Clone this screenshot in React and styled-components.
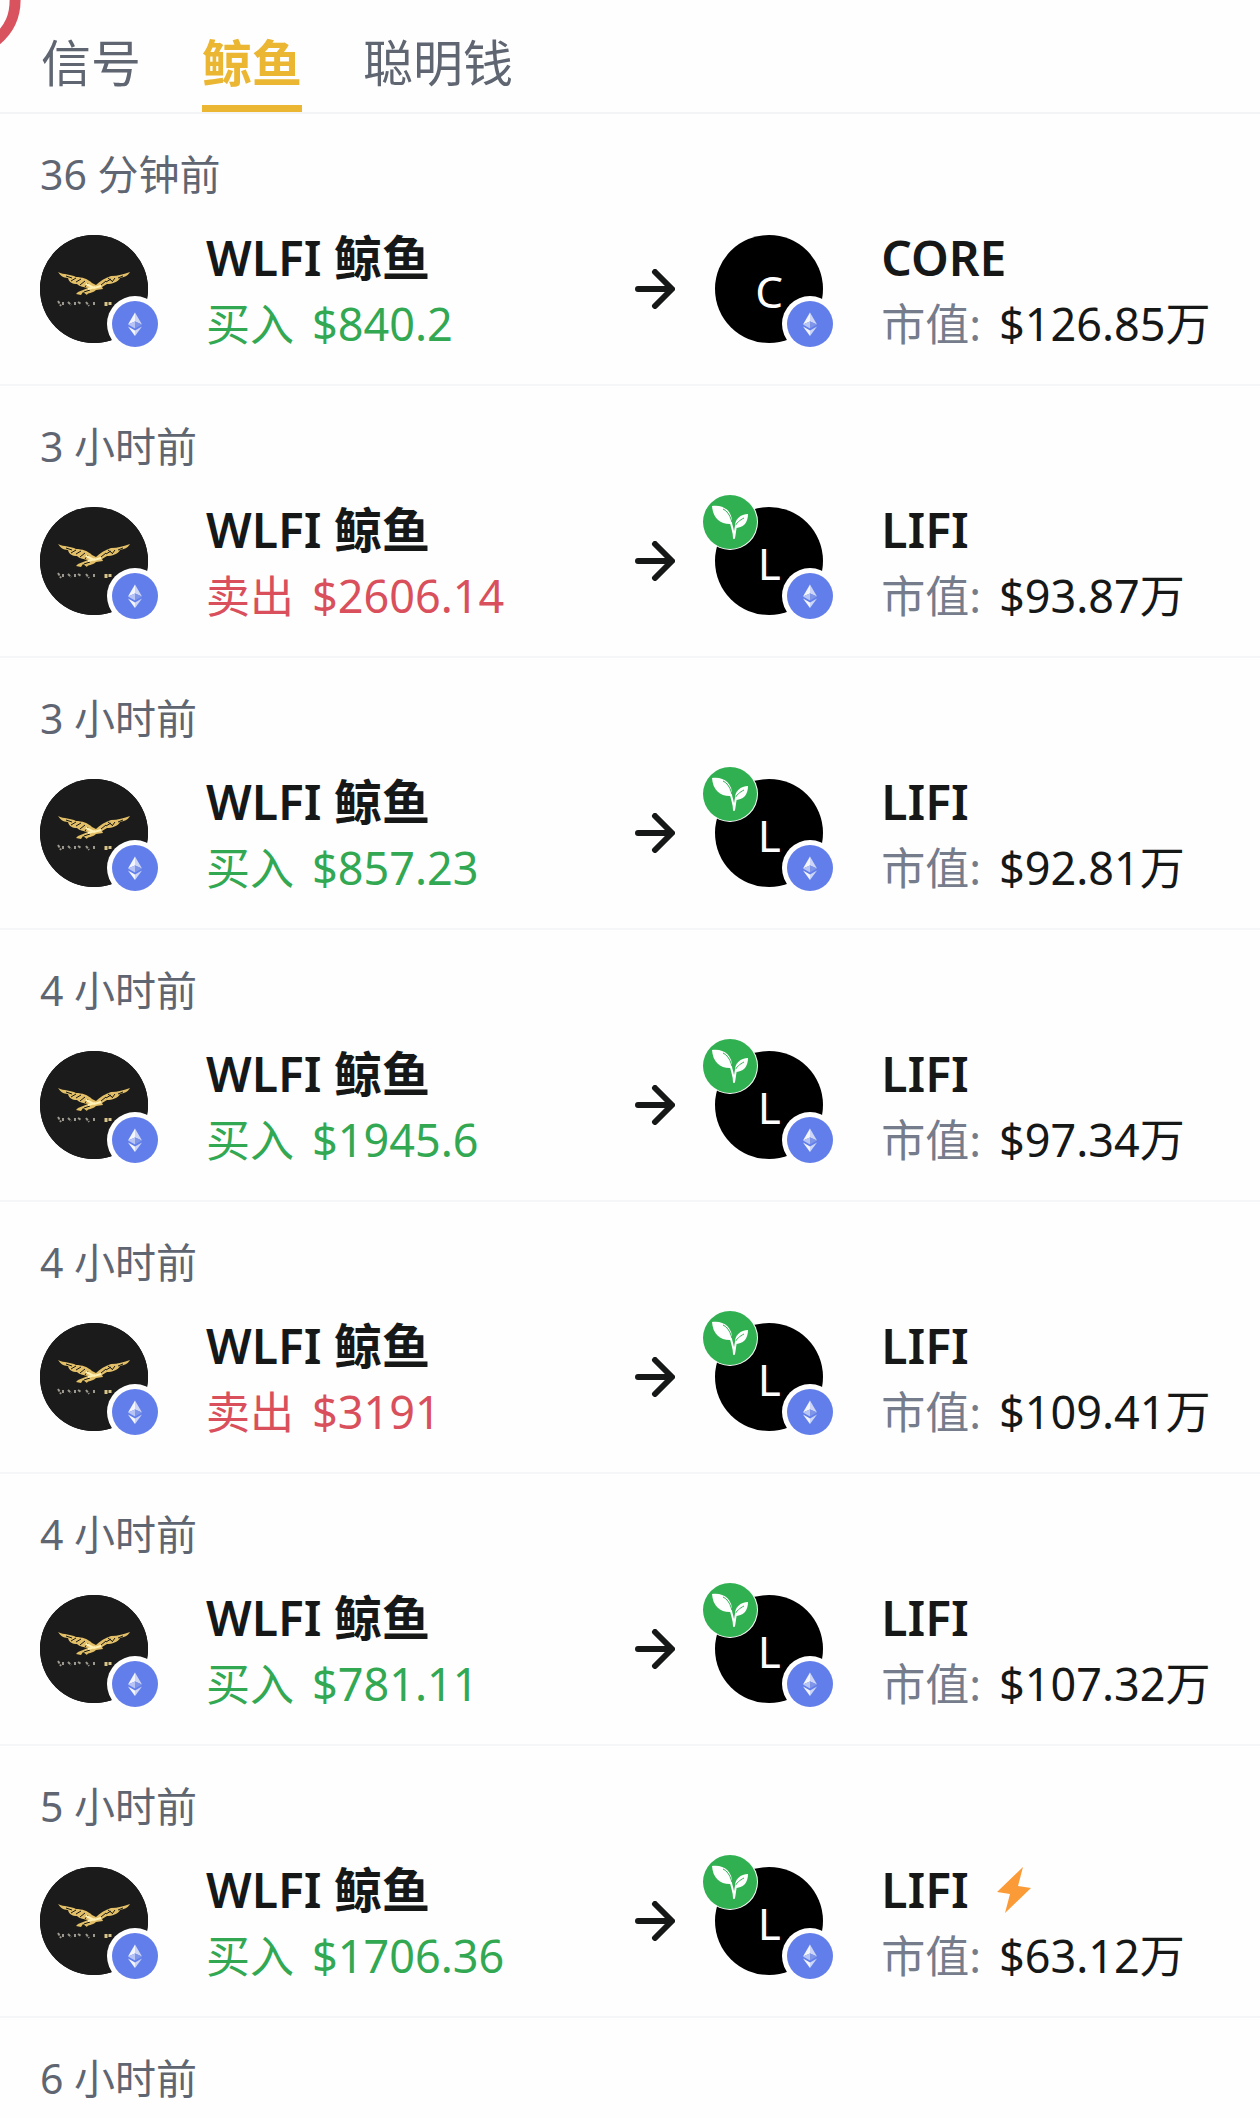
import React from "react"
import styled, { createGlobalStyle } from "styled-components"

const tabs = ["信号", "鲸鱼", "聪明钱"]

const trades = [
  { time: "36 分钟前", side: "buy", amount: "$840.2", token: "CORE", cap: "$126.85万" },
  { time: "3 小时前", side: "sell", amount: "$2606.14", token: "LIFI", cap: "$93.87万", fresh: true },
  { time: "3 小时前", side: "buy", amount: "$857.23", token: "LIFI", cap: "$92.81万", fresh: true },
  { time: "4 小时前", side: "buy", amount: "$1945.6", token: "LIFI", cap: "$97.34万", fresh: true },
  { time: "4 小时前", side: "sell", amount: "$3191", token: "LIFI", cap: "$109.41万", fresh: true },
  { time: "4 小时前", side: "buy", amount: "$781.11", token: "LIFI", cap: "$107.32万", fresh: true },
  { time: "5 小时前", side: "buy", amount: "$1706.36", token: "LIFI", cap: "$63.12万", fresh: true, hot: true },
]

const EthIcon = () => (
  <svg width="46" height="46" viewBox="0 0 46 46" aria-hidden="true">
    <circle cx="23" cy="23" r="23" fill="#627eea" />
    <path d="M23 11.500 16 23.500 23 20.500Z" fill="#f4f6fe" />
    <path d="M23 11.500 30 23.500 23 20.500Z" fill="#cdd6f8" />
    <path d="M16 23.500 23 20.500V27.500Z" fill="#b7c4f5" />
    <path d="M30 23.500 23 20.500V27.500Z" fill="#7f95e8" />
    <path d="M16 25.500 23 29.500V35Z" fill="#f4f6fe" />
    <path d="M30 25.500 23 29.500V35Z" fill="#cdd6f8" />
  </svg>
)

const SproutIcon = () => (
  <svg width="54" height="54" viewBox="0 0 54 54" aria-hidden="true">
    <circle cx="27" cy="27" r="27" fill="#30b050" />
    <path d="M9 11C19 9 30 15 29 29C18 30 10 24 9 11Z" fill="#fff" />
    <path d="M45 19C38 19 31 24 32 33C40 33 45 28 45 19Z" fill="#fff" />
    <path
      d="M20 14C26 17 29 24 30 34M32 32C33 28 37 25 41 23"
      fill="none"
      stroke="#30b050"
      strokeWidth="1"
    />
    <path
      d="M28 28C29 33 31 37 31 43C32 38 32 35 33 31"
      fill="none"
      stroke="#fff"
      strokeWidth="2"
      strokeLinecap="round"
      strokeLinejoin="round"
    />
  </svg>
)

const EagleLogo = () => (
  <svg width="108" height="108" viewBox="0 0 108 108" aria-hidden="true">
    <circle cx="54" cy="54" r="54" fill="#1b1b1b" />
    <path
      d="M18 37C24 40 31 39 36 42C42 42 48 44 52 48L56 50C60 46 65 43 71 41C78 41 84 39 90 37C88 41 84 42 80 43C78 47 72 49 67 49L62 52L63 54L56 55C52 59 48 57 47 60L43 57L41 60L36 59L38 57L43 55L48 53C44 52 40 52 37 49C32 49 29 47 28 43C23 43 20 40 18 37Z"
      fill="#e3c067"
    />
    <path
      d="M26 41 32 43M31 46 36 43M36 47 41 44M40 50 45 46M45 52 48 48M61 50 66 46M66 47 71 44M72 47 75 43M78 43 83 41M44 57 50 55M68 43 72 46"
      stroke="#1b1b1b"
      strokeWidth="1"
      fill="none"
    />
    <path d="M46 49 54 53 61 51M48 54 55 52" stroke="#fff0b5" strokeWidth="2" fill="none" />
    <path
      d="M18 66 21 71M23 67V71M28 67 31 70M35 67V71M38 67 41 69M46 67 49 71M54 67V71"
      stroke="#9d998f"
      strokeWidth="2"
      strokeDasharray="3 1"
      fill="none"
    />
    <path d="M66 67V71M70 67V70" stroke="#d9c48b" strokeWidth="3" />
  </svg>
)

const ArrowIcon = () => (
  <svg width="40" height="40" viewBox="0 0 40 40" aria-hidden="true">
    <path
      d="M3 20H36M20 3 37 20 20 37"
      fill="none"
      stroke="#161818"
      strokeWidth="6"
      strokeLinecap="round"
      strokeLinejoin="round"
    />
  </svg>
)

const BoltIcon = () => (
  <svg width="34" height="48" viewBox="0 0 34 48" aria-hidden="true">
    <path d="M26 1 0 26 13 28 8 47 34 22 21 20Z" fill="#fb9b38" />
  </svg>
)

const CornerRing = () => (
  <Corner width="24" height="50" viewBox="0 0 24 50" aria-hidden="true">
    <path d="M15 -4C16 14 11 29 -6 42" fill="none" stroke="#d9535f" strokeWidth="11" />
  </Corner>
)

const Trade = ({ trade }) => (
  <Row>
    <Time>{trade.time}</Time>
    <Flow>
      <Party>
        <Avatar>
          <EagleLogo />
          <ChainBadge>
            <EthIcon />
          </ChainBadge>
        </Avatar>
        <Info>
          <Name>WLFI 鲸鱼</Name>
          <Detail $side={trade.side}>
            <span>{trade.side === "buy" ? "买入" : "卖出"}</span>
            <Amount>{trade.amount}</Amount>
          </Detail>
        </Info>
      </Party>
      <ArrowIcon />
      <Party>
        <Avatar>
          <Letter>{trade.token[0]}</Letter>
          {trade.fresh && (
            <NewBadge>
              <SproutIcon />
            </NewBadge>
          )}
          <ChainBadge>
            <EthIcon />
          </ChainBadge>
        </Avatar>
        <Info>
          <Name>
            {trade.token}
            {trade.hot && <BoltIcon />}
          </Name>
          <Detail>
            <Label>市值:</Label>
            <Amount>{trade.cap}</Amount>
          </Detail>
        </Info>
      </Party>
    </Flow>
  </Row>
)

const App = () => (
  <Page>
    <GlobalStyle />
    <CornerRing />
    <Tabs>
      {tabs.map((tab) => (
        <Tab key={tab} type="button" $active={tab === "鲸鱼"}>
          {tab}
        </Tab>
      ))}
    </Tabs>
    <List>
      {trades.map((trade, i) => (
        <Trade key={i} trade={trade} />
      ))}
      <LastRow>
        <Time>6 小时前</Time>
      </LastRow>
    </List>
  </Page>
)

const GlobalStyle = createGlobalStyle`
  * {
    box-sizing: border-box;
  }
  body {
    margin: 0;
    background: #fefefe;
    font-family: "Noto Sans", "Noto Sans CJK SC", sans-serif;
    color: #161818;
  }
  svg {
    display: block;
    flex-shrink: 0;
  }
`

const Page = styled.main`
  position: relative;
  overflow: hidden;
`

const Corner = styled.svg`
  position: absolute;
  top: 0;
  left: 0;
`

const Tabs = styled.nav`
  display: flex;
  gap: 61px;
  padding: 16px 41px 0;
  border-bottom: 2px solid #f3f4f5;
`

const Tab = styled.button`
  height: 96px;
  padding: 4px 0 0;
  border: 0;
  border-bottom: 7px solid ${({ $active }) => ($active ? "#ebb631" : "transparent")};
  background: none;
  font-family: inherit;
  font-size: 50px;
  font-weight: ${({ $active }) => ($active ? 700 : 400)};
  line-height: 72px;
  color: ${({ $active }) => ($active ? "#ebb631" : "#5f6672")};
  white-space: nowrap;
`

const List = styled.ul`
  margin: 0;
  padding: 0;
  list-style: none;
`

const Row = styled.li`
  padding: 32px 40px 30px;
  border-bottom: 2px solid #f5f6f7;
`

const LastRow = styled.li`
  padding: 32px 40px 12px;
`

const Time = styled.div`
  font-size: 41px;
  line-height: 56px;
  color: #5f6672;
`

const Flow = styled.div`
  display: grid;
  grid-template-columns: 11fr 40px 10fr;
  column-gap: 40px;
  align-items: center;
  margin-top: 22px;
`

const Party = styled.div`
  display: flex;
  align-items: center;
  gap: 58px;
  min-width: 0;
`

const Avatar = styled.div`
  position: relative;
  display: flex;
  flex-shrink: 0;
  align-items: center;
  justify-content: center;
  width: 108px;
  height: 108px;
  border-radius: 50%;
  background: #000;
`

const Letter = styled.span`
  padding-top: 4px;
  font-size: 44px;
  line-height: 56px;
  color: #fff;
`

const ChainBadge = styled.span`
  position: absolute;
  right: -15px;
  bottom: -9px;
  padding: 5px;
  border-radius: 50%;
  background: #fefefe;
`

const NewBadge = styled.span`
  position: absolute;
  top: -13px;
  left: -13px;
  padding: 1px;
  border-radius: 50%;
  background: #fefefe;
`

const Info = styled.div`
  display: flex;
  flex-direction: column;
  gap: 6px;
  padding-top: 4px;
  white-space: nowrap;
`

const Name = styled.div`
  display: flex;
  align-items: center;
  gap: 28px;
  height: 60px;
  font-size: 48px;
  font-weight: 600;
  line-height: 60px;
`

const sideColors = { buy: "#32a853", sell: "#d9505c" }

const Detail = styled.div`
  display: flex;
  gap: 18px;
  height: 60px;
  font-size: 44px;
  line-height: 60px;
  color: ${({ $side }) => sideColors[$side] || "#161818"};
`

const Amount = styled.span`
  font-size: 45px;
`

const Label = styled.span`
  color: #757c8b;
`

export default App
